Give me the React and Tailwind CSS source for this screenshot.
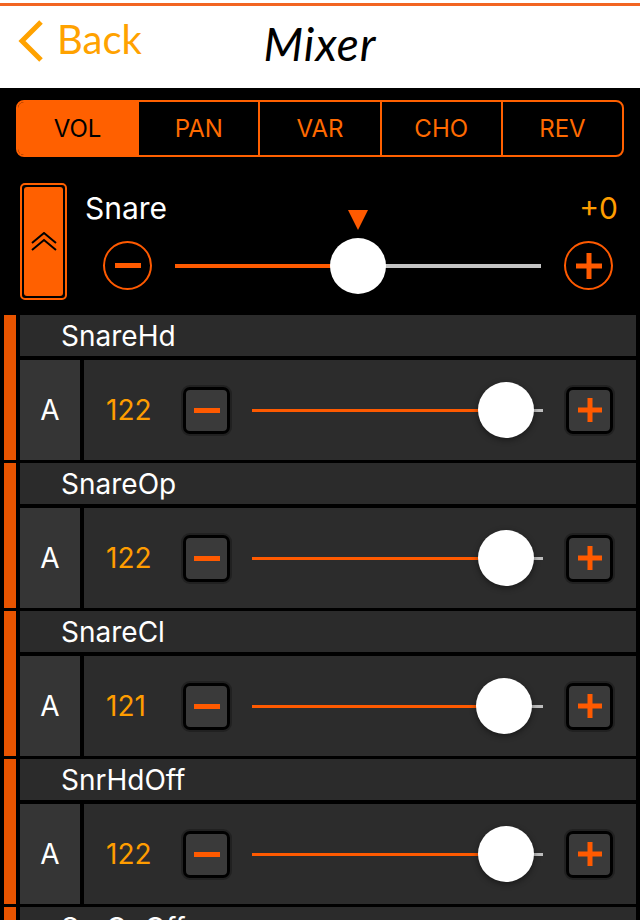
import React from "react";

const channels = [
  { name: "SnareHd", value: 122 },
  { name: "SnareOp", value: 122 },
  { name: "SnareCl", value: 121 },
  { name: "SnrHdOff", value: 122 },
  { name: "SnrOpOff", value: 122 },
];

function SquareButton({ plus }) {
  return (
    <div className="w-[51px] h-[51px] rounded-[9px] bg-[#212121] p-[2px] shrink-0">
      <div className="w-full h-full rounded-[7px] border-[3px] border-black bg-[#3a3a3a] flex items-center justify-center">
        {plus ? (
          <svg width="26" height="26" viewBox="0 0 26 26">
            <rect x="1" y="10.5" width="24" height="5" fill="#FF5A00" />
            <rect x="10.5" y="1" width="5" height="24" fill="#FF5A00" />
          </svg>
        ) : (
          <div className="w-[26px] h-[5px] bg-[#FF5A00]" />
        )}
      </div>
    </div>
  );
}

function Channel({ name, value }) {
  const trackW = 291;
  const knobX = 28 + (value / 127) * (trackW - 56);
  return (
    <div className="flex h-[145px] pl-[4px] pr-[4px]">
      <div className="w-[12px] bg-[#E85400] shrink-0" />
      <div className="flex-1 ml-[4px] flex flex-col">
        <div className="h-[41px] bg-[#2b2b2b] flex items-center pl-[41px] text-white text-[28px] leading-none">
          {name}
        </div>
        <div className="mt-[4px] h-[100px] flex gap-[4px]">
          <div className="w-[60px] bg-[#353535] flex items-center justify-center text-white text-[28px] leading-none">
            A
          </div>
          <div className="flex-1 bg-[#2c2c2c] flex items-center pl-[22px]">
            <div className="w-[75px] text-[#FF9D00] text-[28px] leading-none">{value}</div>
            <SquareButton />
            <div className="ml-[20px] w-[291px] h-[3px] relative bg-[#bdbdbd] shrink-0">
              <div className="absolute left-0 top-0 h-full bg-[#FF5A00]" style={{ width: knobX }} />
              <div
                className="absolute top-1/2 w-[56px] h-[56px] rounded-full bg-white -translate-x-1/2 -translate-y-1/2 shadow-[0_2px_6px_rgba(0,0,0,0.45)]"
                style={{ left: knobX }}
              />
            </div>
            <div className="ml-[21px]">
              <SquareButton plus />
            </div>
          </div>
        </div>
      </div>
    </div>
  );
}

export default function App() {
  const tabs = ["VOL", "PAN", "VAR", "CHO", "REV"];
  return (
    <div
      className="w-[640px] h-[920px] bg-black overflow-hidden"
      style={{ fontFamily: "Inter, 'Liberation Sans', sans-serif" }}
    >
      {/* Header */}
      <div className="bg-white h-[88px] pt-[3px]">
        <div className="h-[3px] bg-[#F26522]" />
        <div
          className="h-[82px] grid grid-cols-3 items-center pb-[16px]"
          style={{ fontFamily: "Lato, 'Liberation Sans', sans-serif" }}
        >
          <div className="flex items-center pl-[17px]">
            <svg width="27" height="42" viewBox="0 0 27 42" className="mt-[4px]">
              <path d="M24 2 L5 21 L24 40" fill="none" stroke="#FFA200" strokeWidth="5" />
            </svg>
            <span className="ml-[13px] text-[40px] leading-none text-[#FFA200]">Back</span>
          </div>
          <div className="text-center text-[46px] leading-none italic text-black tracking-[1px] pt-[10px]">
            Mixer
          </div>
          <div />
        </div>
      </div>

      {/* Tabs */}
      <div className="mx-[16px] mt-[12px] h-[57px] border-2 border-[#FF6000] rounded-[8px] flex overflow-hidden">
        {tabs.map((t, i) => (
          <div
            key={t}
            className={
              "flex-1 flex items-center justify-center text-[24px] leading-none " +
              (i === 0 ? "bg-[#FF6000] text-black" : "border-l-2 border-[#FF6000] text-[#FF6A00]")
            }
          >
            {t}
          </div>
        ))}
      </div>

      {/* Master section */}
      <div className="mt-[26px] flex pl-[20px]">
        <div className="w-[47px] h-[117px] rounded-[5px] border-2 border-[#FF6000] p-[2px] bg-black shrink-0">
          <div className="w-full h-full rounded-[3px] bg-[#FF6000] flex items-center justify-center">
            <svg width="26" height="20" viewBox="0 0 26 20">
              <path d="M1 11 L13 1 L25 11" fill="none" stroke="#000" strokeWidth="2" />
              <path d="M1 18 L13 8 L25 18" fill="none" stroke="#000" strokeWidth="2" />
            </svg>
          </div>
        </div>
        <div className="ml-[18px] flex-1 pr-[22px] flex flex-col">
          <div className="mt-[10px] flex justify-between items-center">
            <span className="text-white text-[30px] leading-none">Snare</span>
            <span className="text-[#FF9D00] text-[30px] leading-none">+0</span>
          </div>
          <div className="mt-[18px] flex items-center pl-[18px]">
            <div className="w-[49px] h-[49px] rounded-full border-2 border-[#FF5A00] flex items-center justify-center shrink-0">
              <div className="w-[26px] h-[5px] bg-[#FF5A00]" />
            </div>
            <div className="mx-[23px] flex-1 h-[4px] relative bg-[#c4c4c4]">
              <div className="absolute left-0 top-0 h-full w-1/2 bg-[#FF5A00]" />
              <svg
                width="20"
                height="20"
                viewBox="0 0 20 20"
                className="absolute left-1/2 -translate-x-1/2 top-[-54px]"
              >
                <path d="M0 0 L20 0 L10 20 Z" fill="#FF5A00" />
              </svg>
              <div className="absolute left-1/2 top-1/2 w-[56px] h-[56px] rounded-full bg-white -translate-x-1/2 -translate-y-1/2" />
            </div>
            <div className="w-[49px] h-[49px] rounded-full border-2 border-[#FF5A00] flex items-center justify-center shrink-0 mr-[5px]">
              <svg width="26" height="26" viewBox="0 0 26 26">
                <rect x="0" y="10.5" width="26" height="5" fill="#FF5A00" />
                <rect x="10.5" y="0" width="5" height="26" fill="#FF5A00" />
              </svg>
            </div>
          </div>
        </div>
      </div>

      {/* Channels */}
      <div className="mt-[15px] flex flex-col gap-[3px]">
        {channels.map((c) => (
          <Channel key={c.name} {...c} />
        ))}
      </div>
    </div>
  );
}
